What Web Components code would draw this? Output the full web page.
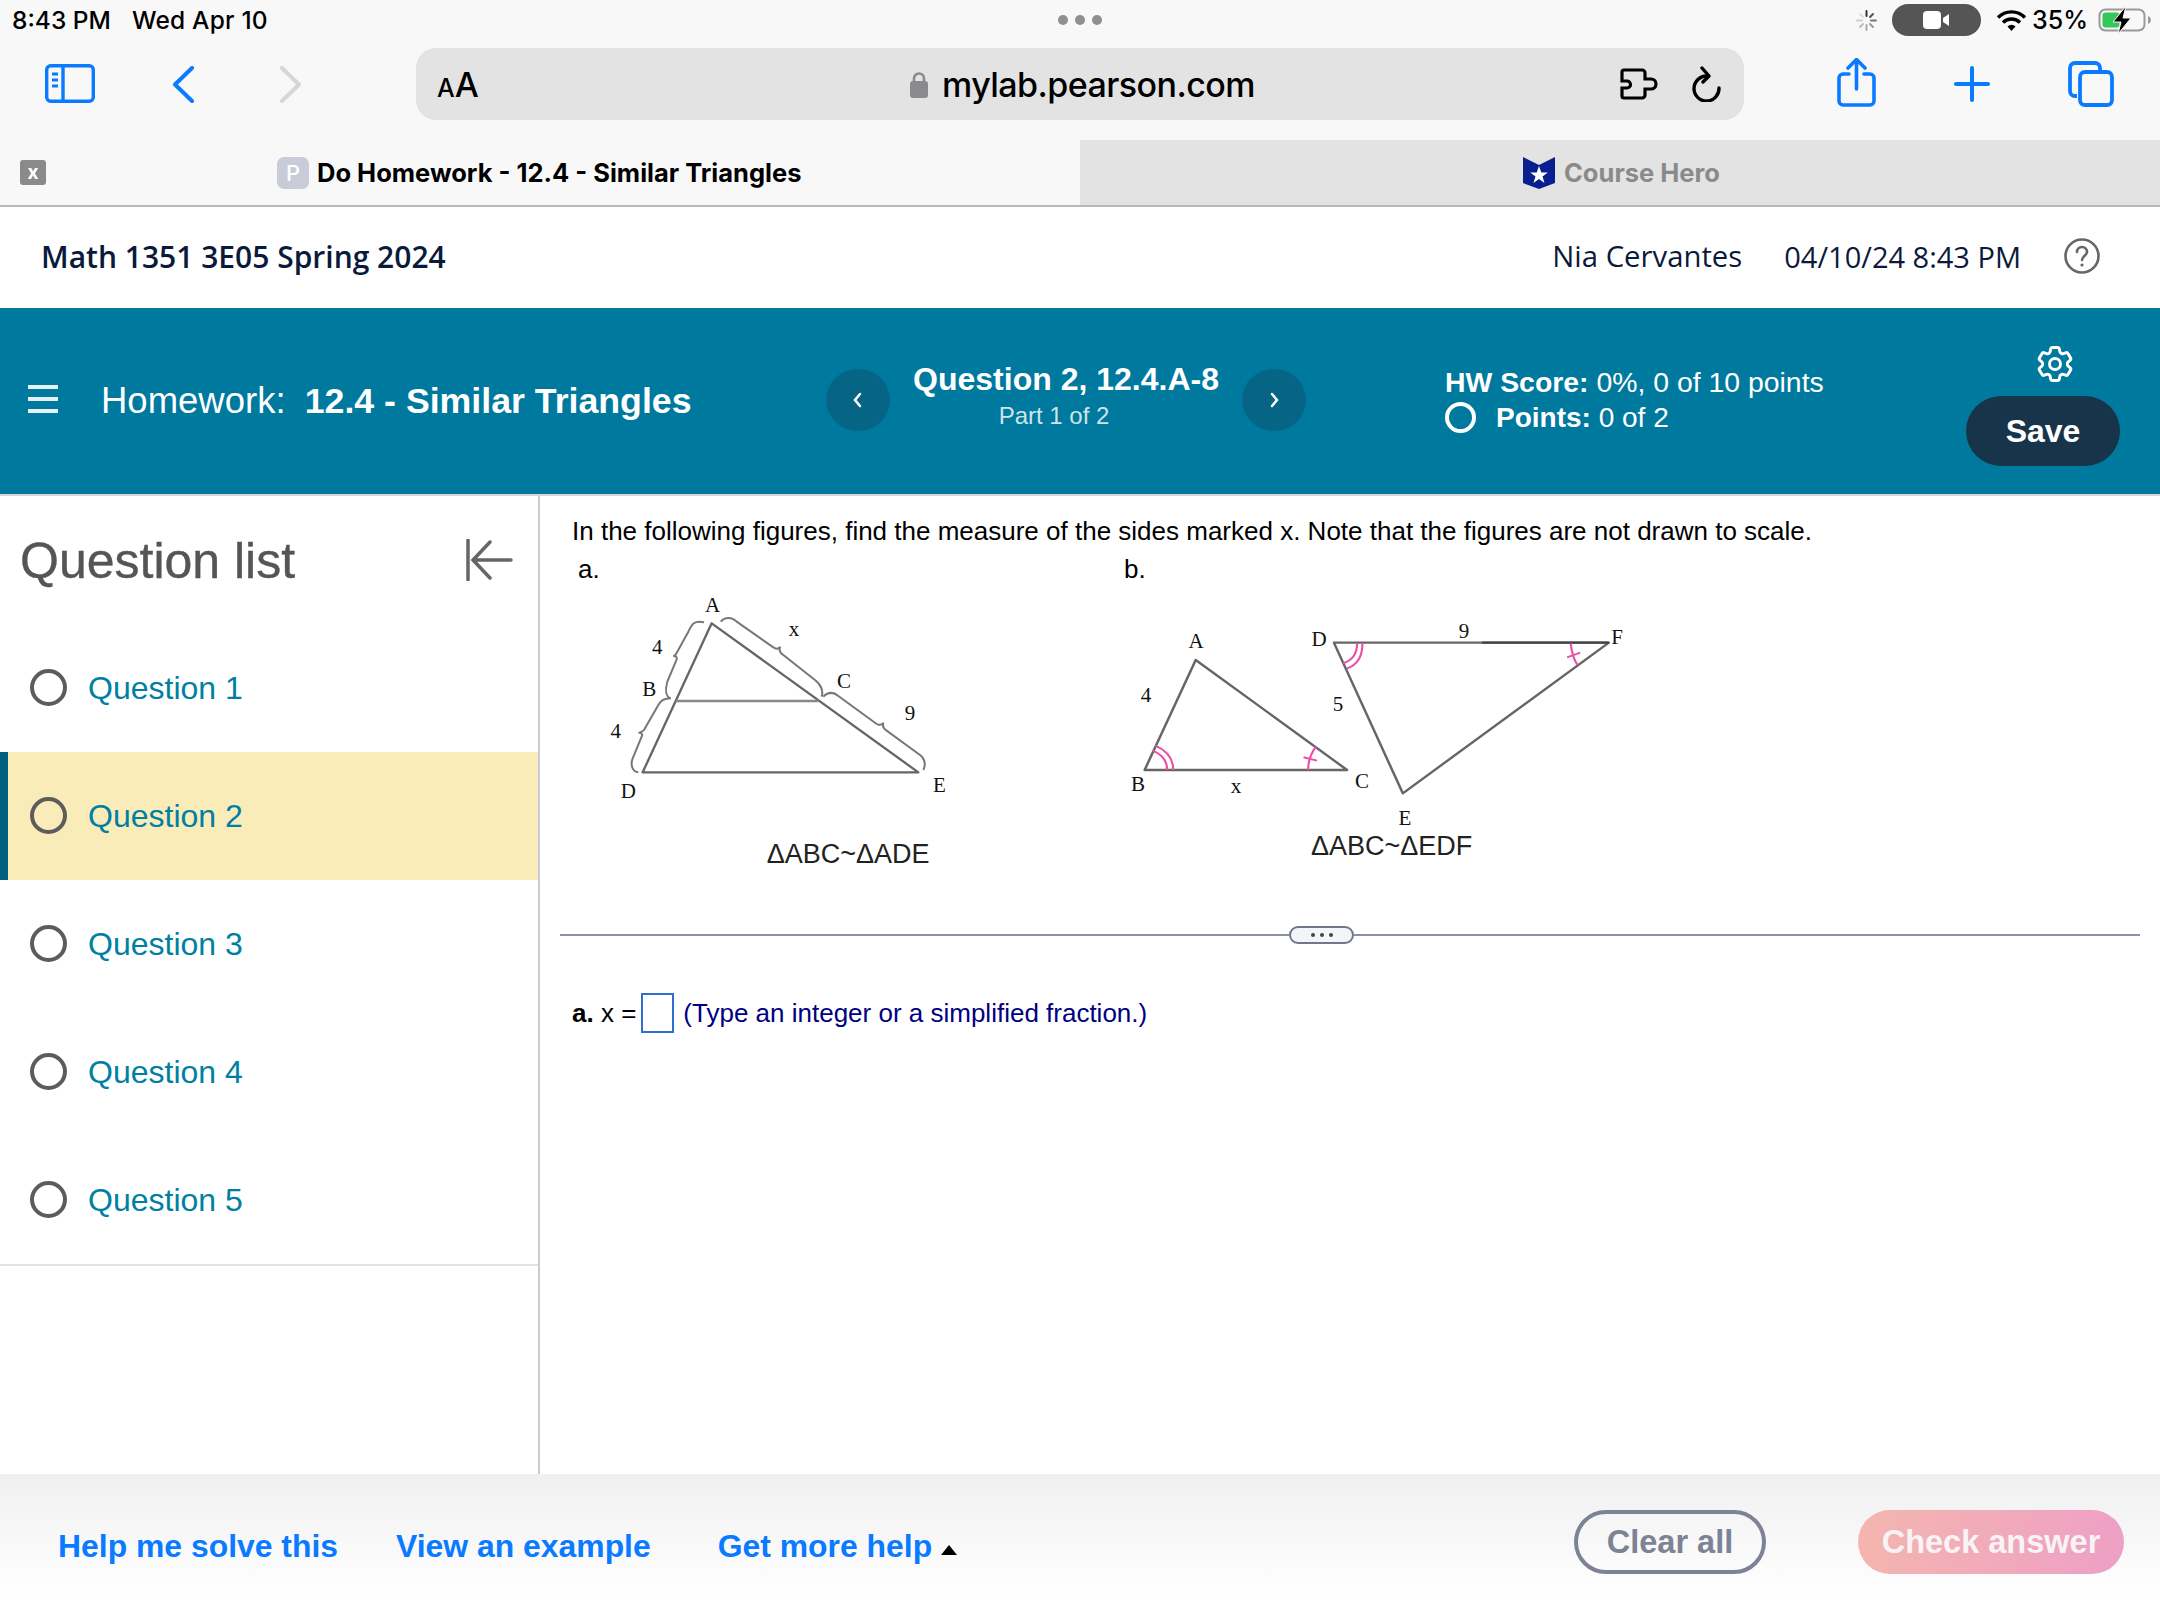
<!DOCTYPE html>
<html lang="en">
<head>
<meta charset="utf-8">
<title>Do Homework - 12.4 - Similar Triangles</title>
<style>
  html, body { margin: 0; height: 100%; background: #fff; }
  body { font-family: "Liberation Sans", Arial, sans-serif; overflow: hidden; }
  #page { display: flex; flex-direction: column; height: 1620px; }
</style>
</head>
<body>
<div id="page">
  <status-bar></status-bar>
  <browser-toolbar></browser-toolbar>
  <tab-strip></tab-strip>
  <course-header></course-header>
  <hw-banner></hw-banner>
  <work-area>
    <question-list slot="side">
      <question-item>Question 1</question-item>
      <question-item active>Question 2</question-item>
      <question-item>Question 3</question-item>
      <question-item>Question 4</question-item>
      <question-item>Question 5</question-item>
    </question-list>
    <question-pane></question-pane>
  </work-area>
  <help-footer></help-footer>
</div>

<script>
class ShadowBox extends HTMLElement {
  constructor() {
    super();
    this._root = this.attachShadow({ mode: 'open' });
    this._root.innerHTML = this.constructor.markup;
  }
}

function define(name, markup) {
  customElements.define(name, class extends ShadowBox {
    static get markup() { return markup; }
  });
}

const BLUE = '#0a7aff';

define('status-bar', `
  <style>
    :host { display: flex; align-items: center; height: 40px; background: #f8f8f8; color: #000;
      font: 500 24.500px Inter, "Liberation Sans", sans-serif; padding: 0 8px 0 12px; box-sizing: border-box; }
    .left, .right { flex: 1; display: flex; align-items: center; }
    .right { justify-content: flex-end; }
    .date { margin-left: 21px; letter-spacing: .2px; }
    .dots { display: flex; gap: 7px; margin-right: 4px; }
    .dots i { width: 10px; height: 10px; border-radius: 50%; background: #8e8e93; }
    .pill { width: 89px; height: 32px; border-radius: 16px; background: #555; display: flex;
      align-items: center; justify-content: center; margin: 0 15px; }
    .pct { margin: 0 10px 0 5px; font-size: 25px; }
  </style>
  <div class="left"><span>8:43 PM</span><span class="date">Wed Apr 10</span></div>
  <div class="dots"><i></i><i></i><i></i></div>
  <div class="right">
    <svg width="21" height="21" viewBox="0 0 21 21" stroke-width="2" stroke-linecap="round">
      <path d="M10.5 1v5" stroke="#333"/><path d="M17 4l-3 3" stroke="#555"/><path d="M20 10.5h-5" stroke="#777"/>
      <path d="M17 17l-3-3" stroke="#999"/><path d="M10.5 20v-5" stroke="#aaa"/><path d="M4 17l3-3" stroke="#bbb"/>
      <path d="M1 10.5h5" stroke="#ccc"/><path d="M4 4l3 3" stroke="#ddd"/>
    </svg>
    <div class="pill">
      <svg width="28" height="18" viewBox="0 0 28 18" fill="#fff"><rect width="18" height="18" rx="4"/><path d="M20 7l6-4v12l-6-4z"/></svg>
    </div>
    <svg width="31" height="23" viewBox="0 0 31 23" fill="none" stroke="#000" stroke-width="3.4">
      <path d="M2 8.5a19 19 0 0 1 27 0"/><path d="M7 13.5a12 12 0 0 1 17 0"/><path d="M15.5 22l-4-4.5a5.5 5.5 0 0 1 8 0z" fill="#000" stroke="none"/>
    </svg>
    <span class="pct">35%</span>
    <svg width="54" height="28" viewBox="0 0 54 28">
      <rect x="1.5" y="3.5" width="45" height="21" rx="6" fill="none" stroke="#999" stroke-width="2"/>
      <path d="M50 10c2 1 3 2.500 3 4s-1 3-3 4z" fill="#999"/>
      <rect x="4.500" y="6.500" width="17" height="15" rx="3" fill="#34c759"/>
      <path d="M28 0L15 16h8l-3 12 13-16h-8z" fill="#000" stroke="#f8f8f8" stroke-width="1"/>
    </svg>
  </div>
`);

define('browser-toolbar', `
  <style>
    :host { display: flex; align-items: flex-start; height: 100px; background: #f8f8f8; padding-top: 8px;
      box-sizing: border-box; }
    svg { display: block; flex: none; }
    .side { margin: 16px 0 0 45px; }
    .back { margin: 18px 0 0 77px; }
    .fwd { margin: 18px 0 0 84px; }
    .url { margin-left: 114px; width: 1328px; height: 72px; border-radius: 20px; background: #e3e3e3;
      display: grid; grid-template-columns: 1fr auto 1fr; align-items: center; padding: 0 22px 0 21px;
      box-sizing: border-box; color: #000; font-family: Inter, "Liberation Sans", sans-serif; }
    .aa { font-weight: 500; font-size: 34px; letter-spacing: 0; }
    .aa small { font-size: 25px; }
    .host { display: flex; align-items: center; gap: 14px; font-size: 34px; font-weight: 500; letter-spacing: -0.55px; margin-left: 6px; }
    .acts { display: flex; justify-content: flex-end; align-items: center; gap: 31px; }
    .share { margin: 10px 0 0 93px; }
    .plus { margin: 18px 0 0 78px; }
    .tabs { margin: 13px 0 0 78px; }
  </style>
  <svg class="side" width="50" height="39" viewBox="0 0 50 39" fill="none" stroke="${BLUE}" stroke-width="3.400">
    <rect x="1.700" y="1.700" width="46.600" height="35.600" rx="4"/><path d="M18 2v35"/>
    <path d="M7 10h6M7 16h6M7 22h6" stroke-width="3"/>
  </svg>
  <svg class="back" width="23" height="37" viewBox="0 0 23 37" fill="none" stroke="${BLUE}" stroke-width="4" stroke-linecap="round" stroke-linejoin="round"><path d="M20 2L3 18.500 20 35"/></svg>
  <svg class="fwd" width="23" height="37" viewBox="0 0 23 37" fill="none" stroke="#d6d6d6" stroke-width="4" stroke-linecap="round" stroke-linejoin="round"><path d="M3 2l17 16.500L3 35"/></svg>
  <div class="url">
    <div class="aa"><small>A</small>A</div>
    <div class="host">
      <svg width="18" height="27" viewBox="0 0 18 27"><path d="M4 12V7.500a5 5 0 0 1 10 0V12" fill="none" stroke="#8a8a8e" stroke-width="2.600"/><rect y="10" width="18" height="17" rx="3" fill="#8a8a8e"/></svg>
      <span>mylab.pearson.com</span>
    </div>
    <div class="acts">
      <svg width="41" height="32" viewBox="0 0 41 32" fill="none" stroke="#000" stroke-width="3.200"><path d="M4 2h18a3 3 0 0 1 3 3v6h6a5 5 0 0 1 0 10h-6v6a3 3 0 0 1-3 3H4a2 2 0 0 1-2-2v-8h5a3.500 3.500 0 0 0 0-7H2V4a2 2 0 0 1 2-2z"/></svg>
      <svg width="30" height="36" viewBox="0 0 30 36" fill="none" stroke="#000" stroke-width="3.400" stroke-linecap="round" stroke-linejoin="round"><path d="M15 10A12.500 12.500 0 1 0 27 22"/><path d="M10 2l7 8-6 6"/></svg>
    </div>
  </div>
  <svg class="share" width="39" height="49" viewBox="0 0 39 49" fill="none" stroke="${BLUE}" stroke-width="3.600" stroke-linecap="round" stroke-linejoin="round">
    <path d="M12 16H6a4 4 0 0 0-4 4v23a4 4 0 0 0 4 4h27a4 4 0 0 0 4-4V20a4 4 0 0 0-4-4h-6"/><path d="M19.500 31V2M11 10l8.500-8.500L28 10"/>
  </svg>
  <svg class="plus" width="36" height="36" viewBox="0 0 36 36" fill="none" stroke="${BLUE}" stroke-width="4" stroke-linecap="round"><path d="M18 2v32M2 18h32"/></svg>
  <svg class="tabs" width="46" height="46" viewBox="0 0 46 46" fill="none" stroke="${BLUE}" stroke-width="3.800">
    <path d="M9 35H7a5 5 0 0 1-5-5V7a5 5 0 0 1 5-5h20a5 5 0 0 1 5 5v3"/><rect x="12" y="11" width="32" height="33" rx="5"/>
  </svg>
`);

define('tab-strip', `
  <style>
    :host { display: flex; height: 67px; border-bottom: 2px solid #b8b8b8; box-sizing: border-box;
      font: 700 25.500px Inter, "Liberation Sans", sans-serif; }
    .tab { flex: none; width: 50%; display: flex; align-items: center; box-sizing: border-box; white-space: nowrap; }
    .on { background: #f8f8f8; color: #000; padding-left: 20px; }
    .off { background: #e3e3e3; color: #8a8a8a; padding-left: 443px; }
    .x { width: 26px; height: 25px; border-radius: 3px; background: #8a8a8a; color: #fff; font-size: 19px;
      display: flex; align-items: center; justify-content: center; }
    .fav { width: 32px; height: 32px; border-radius: 7px; background: #c9ccd8; color: #fff; font-size: 22px;
      font-weight: 500; display: flex; align-items: center; justify-content: center; margin: 0 8px 0 231px; }
    svg { margin-right: 9px; flex: none; }
  </style>
  <div class="tab on"><span class="x">x</span><span class="fav">P</span><span>Do Homework - 12.4 - Similar Triangles</span></div>
  <div class="tab off">
    <svg width="32" height="32" viewBox="0 0 32 32"><path d="M0 0l16 8 16-8v26l-16 6-16-6z" fill="#0a1f8f"/><path d="M16 9l2.300 6.500h6.500l-5.300 4 2 6.500-5.500-4-5.500 4 2-6.500-5.300-4h6.500z" fill="#fff"/></svg>
    <span>Course Hero</span>
  </div>
`);

define('course-header', `
  <style>
    :host { display: flex; align-items: center; height: 101px; background: #fff; padding: 0 60px 3px 41px;
      box-sizing: border-box; color: #0b1a3b; font: 400 29.300px "Open Sans", sans-serif; }
    .title { flex: 1; font-weight: 600; font-size: 30px; }
    .date { margin-left: 42px; font-size: 29px; }
    svg { margin-left: 43px; }
  </style>
  <span class="title">Math 1351 3E05 Spring 2024</span>
  <span>Nia Cervantes</span>
  <span class="date">04/10/24 8:43 PM</span>
  <svg width="36" height="36" viewBox="0 0 36 36" fill="none" stroke="#666" stroke-width="2.600">
    <circle cx="18" cy="18" r="16.500"/><path d="M13 14a5 5 0 0 1 10 0c0 3.500-5 4-5 8" stroke-linecap="round"/><circle cx="18" cy="27" r="1.600" fill="#666" stroke="none"/>
  </svg>
`);

define('round-nav', `
  <style>
    :host { display: flex; width: 64px; height: 62px; border-radius: 50%; background: #066585; align-items: center; justify-content: center; flex: none; margin-top: -2px; }
  </style>
  <slot></slot>
`);

define('hw-banner', `
  <style>
    :host { display: flex; align-items: center; height: 188px; background: #00799e; border-bottom: 2px solid #d8d8d8;
      box-sizing: border-box; color: #fff; font-family: "Liberation Sans", sans-serif; position: relative; }
    .burger { margin-left: 28px; width: 30px; height: 28px; border-top: 4px solid #e6f1f5; border-bottom: 4px solid #e6f1f5;
      box-sizing: border-box; position: relative; flex: none; margin-top: -4px; }
    .burger::after { content: ""; position: absolute; left: 0; right: 0; top: 8px; height: 4px; background: #e6f1f5; }
    .name { margin-left: 43px; width: 725px; font-size: 36.500px; white-space: nowrap; flex: none; }
    .name b { margin-left: 9px; font-size: 35.700px; }
    .q { width: 352px; text-align: center; flex: none; margin-top: -10px; }
    .q b { display: block; font-size: 32px; line-height: 38px; margin-bottom: 2px; }
    .q span { display: block; font-size: 24px; line-height: 32px; color: #cfe3ea; padding-right: 24px; }
    .score { margin-left: 139px; font-size: 28.400px; line-height: 36px; flex: none; margin-top: -3px; }
    .pts { display: flex; align-items: center; gap: 20px; font-size: 28px; }
    .pts i { width: 31px; height: 31px; border: 4px solid #fff; border-radius: 50%; box-sizing: border-box; }
    .end { margin-left: auto; margin-right: 40px; width: 154px; display: flex; flex-direction: column; align-items: center; margin-top: 6px; }
    .gear { display: block; margin: 0 0 10px 24px; }
    .save { width: 154px; height: 70px; border-radius: 35px; background: #17344a; color: #fff; font-weight: 700; font-size: 32px;
      display: flex; align-items: center; justify-content: center; }
  </style>
  <div class="burger"></div>
  <div class="name">Homework: <b>12.4 - Similar Triangles</b></div>
  <round-nav><svg width="12" height="20" viewBox="0 0 12 20" fill="none" stroke="#fff" stroke-width="2.500" stroke-linecap="round"><path d="M8 4L3 10l5 6"/></svg></round-nav>
  <div class="q"><b>Question 2, 12.4.A-8</b><span>Part 1 of 2</span></div>
  <round-nav><svg width="12" height="20" viewBox="0 0 12 20" fill="none" stroke="#fff" stroke-width="2.500" stroke-linecap="round"><path d="M4 4l5 6-5 6"/></svg></round-nav>
  <div class="score">
    <div><b>HW Score:</b> 0%, 0 of 10 points</div>
    <div class="pts"><i></i><span><b>Points:</b> 0 of 2</span></div>
  </div>
  <div class="end">
    <svg class="gear" width="44" height="44" viewBox="0 0 24 24" fill="none" stroke="#fff" stroke-width="1.600" stroke-linejoin="round">
      <path d="M9.594 3.94c.09-.542.56-.94 1.11-.94h2.593c.55 0 1.02.398 1.11.94l.213 1.281c.063.374.313.686.645.87.074.04.147.083.22.127.325.196.72.257 1.075.124l1.217-.456a1.125 1.125 0 0 1 1.37.49l1.296 2.247a1.125 1.125 0 0 1-.26 1.431l-1.003.827c-.293.241-.438.613-.43.992a7.723 7.723 0 0 1 0 .255c-.008.378.137.75.43.991l1.004.827c.424.35.534.955.26 1.43l-1.298 2.247a1.125 1.125 0 0 1-1.369.491l-1.217-.456c-.355-.133-.75-.072-1.076.124a6.47 6.47 0 0 1-.22.128c-.331.183-.581.495-.644.869l-.213 1.281c-.09.543-.56.94-1.11.94h-2.594c-.55 0-1.019-.398-1.11-.94l-.213-1.281c-.062-.374-.312-.686-.644-.87a6.52 6.52 0 0 1-.22-.127c-.325-.196-.72-.257-1.076-.124l-1.217.456a1.125 1.125 0 0 1-1.369-.49l-1.297-2.247a1.125 1.125 0 0 1 .26-1.431l1.004-.827c.292-.24.437-.613.43-.991a6.932 6.932 0 0 1 0-.255c.007-.38-.138-.751-.43-.992l-1.004-.827a1.125 1.125 0 0 1-.26-1.43l1.297-2.247a1.125 1.125 0 0 1 1.37-.491l1.216.456c.356.133.751.072 1.076-.124.072-.044.146-.086.22-.128.332-.183.582-.495.644-.869l.214-1.28Z"/>
      <circle cx="12" cy="12" r="3"/>
    </svg>
    <div class="save">Save</div>
  </div>
`);

define('work-area', `
  <style>
    :host { display: flex; height: 978px; background: #fff; }
    .side { width: 540px; flex: none; border-right: 2px solid #c8ccd4; box-sizing: border-box; }
    .main { flex: 1; min-width: 0; margin-left: -1px; }
  </style>
  <div class="side"><slot name="side"></slot></div>
  <div class="main"><slot></slot></div>
`);

define('question-list', `
  <style>
    :host { display: block; }
    .head { display: flex; align-items: center; justify-content: space-between; height: 128px; padding: 0 25px 0 20px; box-sizing: border-box; }
    h2 { margin: 2px 0 0; font: 400 50px "Liberation Sans", sans-serif; color: #555; -webkit-text-stroke: .4px #555; }
    .items { border-bottom: 2px solid #e2e2e2; }
    svg { display: block; }
  </style>
  <div class="head">
    <h2>Question list</h2>
    <svg width="48" height="42" viewBox="0 0 48 42" fill="none" stroke="#666" stroke-width="3.500" stroke-linecap="round">
      <path d="M3 1v40M46 21H10M25 3L8 21l17 18"/>
    </svg>
  </div>
  <div class="items"><slot></slot></div>
`);

define('question-item', `
  <style>
    :host { display: flex; align-items: center; height: 128px; padding-left: 30px; box-sizing: border-box;
      color: #007fa3; font: 400 32px "Liberation Sans", sans-serif; gap: 21px; }
    :host([active]) { background: #faecb9; border-left: 8px solid #00607f; padding-left: 22px; }
    i { width: 37px; height: 37px; border: 4px solid #5c5c5c; border-radius: 50%; box-sizing: border-box; flex: none; margin-top: -2px; }
    span { padding-top: 1px; }
  </style>
  <i></i><span><slot></slot></span>
`);

define('figure-a', `
  <style>
    :host { display: block; width: 460px; height: 280px; margin-top: 2px; }
    svg { display: block; }
    .l { font: 63px "Liberation Serif", serif; text-anchor: middle; fill: #111; }
    .t { font: 81px "Liberation Sans", sans-serif; fill: #222; }
    .soft { filter: blur(.5px); }
  </style>
  <svg width="460" height="280" viewBox="0 60 1380 840">
    <g class="soft" fill="none" stroke="#666" stroke-width="7" stroke-linejoin="round">
      <path d="M455 160L248 607H1075z"/><path d="M347 393H775" stroke="#888"/>
      <g stroke="#777" stroke-width="6">
        <path d="M432 157C400 150 395 165 385 185L352 245Q348 255 342 258Q352 258 350 268L322 335C315 360 318 380 332 385"/>
        <path d="M332 385C310 385 300 395 295 405L252 480Q248 485 238 488Q250 490 245 500L218 565C210 585 218 605 235 607"/>
        <path d="M482 155C495 140 515 140 530 155L640 232Q650 240 660 232Q655 245 670 255L765 330C785 345 790 365 785 380"/>
        <path d="M790 380C805 365 820 365 835 378L950 462Q960 468 970 460Q965 472 980 482L1080 555C1095 565 1098 585 1090 600"/>
      </g>
    </g>
    <text class="l" x="458" y="127">A</text><text class="l" x="702" y="197">x</text>
    <text class="l" x="292" y="252">4</text><text class="l" x="852" y="354">C</text>
    <text class="l" x="268" y="378">B</text><text class="l" x="1050" y="450">9</text>
    <text class="l" x="167" y="504">4</text><text class="l" x="205" y="684">D</text>
    <text class="l" x="1138" y="666">E</text>
    <text class="t" x="620" y="880">ΔABC~ΔADE</text>
  </svg>
`);

define('figure-b', `
  <style>
    :host { display: block; width: 560px; height: 280px; margin-top: 2px; }
    svg { display: block; }
    .l { font: 21px "Liberation Serif", serif; text-anchor: middle; fill: #111; }
    .t { font: 27px "Liberation Sans", sans-serif; fill: #222; }
    .soft { filter: blur(.4px); }
  </style>
  <svg width="560" height="280" viewBox="0 -10 560 280">
    <g transform="scale(.3571 .3333)" fill="none">
      <g class="soft" stroke="#666" stroke-width="7" stroke-linejoin="round">
        <path d="M125 510L268 180 692 510z"/>
        <path d="M1425 128L655 128 848 580z"/>
        <path d="M1070 128H1425" stroke="#444"/>
      </g>
      <g stroke="#ec4fa8" stroke-width="6">
        <path d="M155 437Q205 460 205 510"/><path d="M148 452Q188 470 188 510"/>
        <path d="M735 130Q735 190 692 205"/><path d="M720 130Q720 178 680 190"/>
        <path d="M1318 130Q1322 170 1337 195"/><path d="M1308 172L1345 158"/>
        <path d="M605 440Q583 470 583 510"/><path d="M570 472L608 482"/>
      </g>
    </g>
    <text class="l" x="96" y="48">A</text><text class="l" x="219" y="46">D</text>
    <text class="l" x="364" y="38">9</text><text class="l" x="517" y="44">F</text>
    <text class="l" x="46" y="102">4</text><text class="l" x="238" y="111">5</text>
    <text class="l" x="38" y="191">B</text><text class="l" x="136" y="193">x</text>
    <text class="l" x="262" y="188">C</text><text class="l" x="305" y="225">E</text>
    <text class="t" x="211" y="255">ΔABC~ΔEDF</text>
  </svg>
`);

define('question-pane', `
  <style>
    :host { display: block; padding: 16px 20px 0 21px; color: #000; font: 400 26px/38px "Liberation Sans", sans-serif; }
    .ask { padding-left: 12px; }
    .figs { display: grid; grid-template-columns: 540px auto; }
    .a { padding-left: 18px; }
    .b { padding-left: 24px; }
    .split { display: flex; align-items: center; margin-top: 56px; height: 18px; }
    .split i { flex: 1; height: 2px; background: #8a93a6; }
    .split span { width: 65px; height: 18px; box-sizing: border-box; border: 2.500px solid #6f7788; border-radius: 9px; background: #f3f5f8;
      display: flex; align-items: center; justify-content: center; gap: 5px; }
    .split b { width: 4px; height: 4px; border-radius: 50%; background: #444; }
    .ans { display: flex; align-items: center; margin-top: 49px; padding-left: 12px; height: 40px; }
    .ans i { width: 33px; height: 40px; border: 2px solid #2f6fd0; box-sizing: border-box; margin: 0 9px 0 5px; }
    .ans em { font-style: normal; color: #000080; }
  </style>
  <div class="ask">In the following figures, find the measure of the sides marked x. Note that the figures are not drawn to scale.</div>
  <div class="figs">
    <div class="a">a.</div><div class="b">b.</div>
    <figure-a></figure-a><figure-b></figure-b>
  </div>
  <div class="split"><i></i><span><b></b><b></b><b></b></span><i style="flex:none;width:786px"></i></div>
  <div class="ans"><span><b>a.</b> x =</span><i></i><em>(Type an integer or a simplified fraction.)</em></div>
`);

define('help-footer', `
  <style>
    :host { display: flex; align-items: center; height: 146px; padding: 0 36px 0 58px; box-sizing: border-box;
      background: linear-gradient(#f0f0f0, #fff 85%); font: 700 31.900px "Liberation Sans", sans-serif; color: ${BLUE}; }
    .links { flex: 1; display: flex; align-items: center; margin-top: -2px; }
    .links span + span { margin-left: 58px; }
    .links span:last-child { margin-left: 67px; }
    .caret { display: inline-block; width: 0; height: 0; border: 8px solid transparent; border-top: 0; border-bottom: 10px solid #000; margin-left: 9px; vertical-align: 2px; }
    .btn { height: 64px; border-radius: 32px; box-sizing: border-box; display: flex; align-items: center; justify-content: center; margin-top: -10px; font-size: 32.500px; }
    .clear { width: 192px; border: 4px solid #7d8394; color: #7d8394; }
    .check { width: 266px; margin-left: 92px; color: #f8f4f6; background: linear-gradient(100deg, #f4b6ae, #ee9fc6); }
  </style>
  <div class="links">
    <span>Help me solve this</span><span>View an example</span><span>Get more help<i class="caret"></i></span>
  </div>
  <div class="btn clear">Clear all</div>
  <div class="btn check">Check answer</div>
`);
</script>
</body>
</html>
